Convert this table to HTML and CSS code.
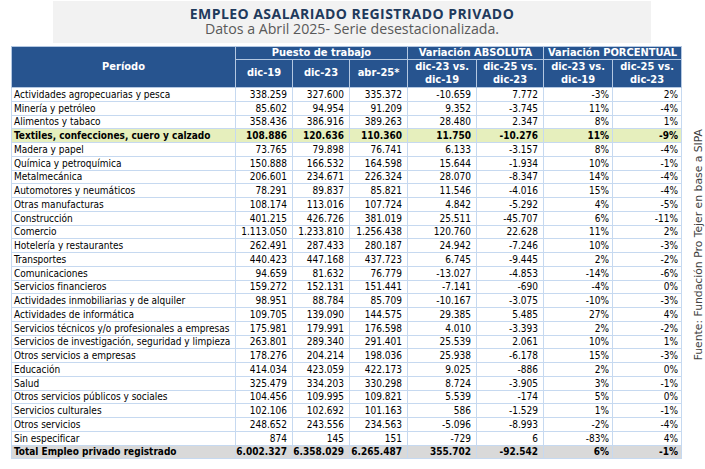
FILE: index.html
```html
<!DOCTYPE html>
<html lang="es">
<head>
<meta charset="utf-8">
<link rel="stylesheet" href="styles.css">
</head>
<body>
<div class="page">
  <div class="titlebox">
    <div class="title">EMPLEO ASALARIADO REGISTRADO PRIVADO</div>
    <div class="subtitle">Datos a Abril 2025- Serie desestacionalizada.</div>
  </div>
  <div class="main">
    <table class="data">
      <colgroup>
        <col class="c-name"><col class="c-n1"><col class="c-n2"><col class="c-n3"><col class="c-a1"><col class="c-a2"><col class="c-p1"><col class="c-p2">
      </colgroup>
      <thead>
        <tr class="h1">
          <th rowspan="2">Período</th>
          <th colspan="3">Puesto de trabajo</th>
          <th colspan="2">Variación ABSOLUTA</th>
          <th colspan="2">Variación PORCENTUAL</th>
        </tr>
        <tr class="h2">
          <th>dic-19</th><th>dic-23</th><th>abr-25*</th>
          <th>dic-23 vs.<br>dic-19</th><th>dic-25 vs.<br>dic-23</th>
          <th>dic-23 vs.<br>dic-19</th><th>dic-25 vs.<br>dic-23</th>
        </tr>
      </thead>
      <tbody>
        <tr><td>Actividades agropecuarias y pesca</td><td>338.259</td><td>327.600</td><td>335.372</td><td>-10.659</td><td>7.772</td><td class="p">-3%</td><td class="p">2%</td></tr>
        <tr><td>Minería y petróleo</td><td>85.602</td><td>94.954</td><td>91.209</td><td>9.352</td><td>-3.745</td><td class="p">11%</td><td class="p">-4%</td></tr>
        <tr><td>Alimentos y tabaco</td><td>358.436</td><td>386.916</td><td>389.263</td><td>28.480</td><td>2.347</td><td class="p">8%</td><td class="p">1%</td></tr>
        <tr class="hl"><td>Textiles, confecciones, cuero y calzado</td><td>108.886</td><td>120.636</td><td>110.360</td><td>11.750</td><td>-10.276</td><td class="p">11%</td><td class="p">-9%</td></tr>
        <tr><td>Madera y papel</td><td>73.765</td><td>79.898</td><td>76.741</td><td>6.133</td><td>-3.157</td><td class="p">8%</td><td class="p">-4%</td></tr>
        <tr><td>Química y petroquímica</td><td>150.888</td><td>166.532</td><td>164.598</td><td>15.644</td><td>-1.934</td><td class="p">10%</td><td class="p">-1%</td></tr>
        <tr><td>Metalmecánica</td><td>206.601</td><td>234.671</td><td>226.324</td><td>28.070</td><td>-8.347</td><td class="p">14%</td><td class="p">-4%</td></tr>
        <tr><td>Automotores y neumáticos</td><td>78.291</td><td>89.837</td><td>85.821</td><td>11.546</td><td>-4.016</td><td class="p">15%</td><td class="p">-4%</td></tr>
        <tr><td>Otras manufacturas</td><td>108.174</td><td>113.016</td><td>107.724</td><td>4.842</td><td>-5.292</td><td class="p">4%</td><td class="p">-5%</td></tr>
        <tr><td>Construcción</td><td>401.215</td><td>426.726</td><td>381.019</td><td>25.511</td><td>-45.707</td><td class="p">6%</td><td class="p">-11%</td></tr>
        <tr><td>Comercio</td><td>1.113.050</td><td>1.233.810</td><td>1.256.438</td><td>120.760</td><td>22.628</td><td class="p">11%</td><td class="p">2%</td></tr>
        <tr><td>Hotelería y restaurantes</td><td>262.491</td><td>287.433</td><td>280.187</td><td>24.942</td><td>-7.246</td><td class="p">10%</td><td class="p">-3%</td></tr>
        <tr><td>Transportes</td><td>440.423</td><td>447.168</td><td>437.723</td><td>6.745</td><td>-9.445</td><td class="p">2%</td><td class="p">-2%</td></tr>
        <tr><td>Comunicaciones</td><td>94.659</td><td>81.632</td><td>76.779</td><td>-13.027</td><td>-4.853</td><td class="p">-14%</td><td class="p">-6%</td></tr>
        <tr><td>Servicios financieros</td><td>159.272</td><td>152.131</td><td>151.441</td><td>-7.141</td><td>-690</td><td class="p">-4%</td><td class="p">0%</td></tr>
        <tr><td>Actividades inmobiliarias y de alquiler</td><td>98.951</td><td>88.784</td><td>85.709</td><td>-10.167</td><td>-3.075</td><td class="p">-10%</td><td class="p">-3%</td></tr>
        <tr><td>Actividades de informática</td><td>109.705</td><td>139.090</td><td>144.575</td><td>29.385</td><td>5.485</td><td class="p">27%</td><td class="p">4%</td></tr>
        <tr><td>Servicios técnicos y/o profesionales a empresas</td><td>175.981</td><td>179.991</td><td>176.598</td><td>4.010</td><td>-3.393</td><td class="p">2%</td><td class="p">-2%</td></tr>
        <tr><td>Servicios de investigación, seguridad y limpieza</td><td>263.801</td><td>289.340</td><td>291.401</td><td>25.539</td><td>2.061</td><td class="p">10%</td><td class="p">1%</td></tr>
        <tr><td>Otros servicios a empresas</td><td>178.276</td><td>204.214</td><td>198.036</td><td>25.938</td><td>-6.178</td><td class="p">15%</td><td class="p">-3%</td></tr>
        <tr><td>Educación</td><td>414.034</td><td>423.059</td><td>422.173</td><td>9.025</td><td>-886</td><td class="p">2%</td><td class="p">0%</td></tr>
        <tr><td>Salud</td><td>325.479</td><td>334.203</td><td>330.298</td><td>8.724</td><td>-3.905</td><td class="p">3%</td><td class="p">-1%</td></tr>
        <tr><td>Otros servicios públicos y sociales</td><td>104.456</td><td>109.995</td><td>109.821</td><td>5.539</td><td>-174</td><td class="p">5%</td><td class="p">0%</td></tr>
        <tr><td>Servicios culturales</td><td>102.106</td><td>102.692</td><td>101.163</td><td>586</td><td>-1.529</td><td class="p">1%</td><td class="p">-1%</td></tr>
        <tr><td>Otros servicios</td><td>248.652</td><td>243.556</td><td>234.563</td><td>-5.096</td><td>-8.993</td><td class="p">-2%</td><td class="p">-4%</td></tr>
        <tr><td>Sin especificar</td><td>874</td><td>145</td><td>151</td><td>-729</td><td>6</td><td class="p">-83%</td><td class="p">4%</td></tr>
        <tr class="total"><td>Total Empleo privado registrado</td><td>6.002.327</td><td>6.358.029</td><td>6.265.487</td><td>355.702</td><td>-92.542</td><td class="p">6%</td><td class="p">-1%</td></tr>
      </tbody>
    </table>
    <div class="source">Fuente: Fundación Pro Tejer en base a SIPA</div>
  </div>
</div>
</body>
</html>
```

FILE: styles.css
```css
html, body {
  margin: 0;
  padding: 0;
  background: #ffffff;
}

.page {
  width: 705px;
  height: 469px;
  display: flex;
  flex-direction: column;
  font-family: "DejaVu Sans Condensed", "Liberation Sans", sans-serif;
}

.titlebox {
  margin: 1px 0 0 53px;
  width: 598px;
  height: 42px;
  background: #f2f2f2;
  display: flex;
  flex-direction: column;
  align-items: center;
  font-family: "Open Sans", "Liberation Sans", sans-serif;
}

.title {
  margin-top: 5px;
  font-weight: 700;
  font-size: 14px;
  line-height: 15px;
  color: #1f3a5c;
  letter-spacing: 0.45px;
}

.subtitle {
  font-size: 14.2px;
  line-height: 16px;
  color: #595959;
}

.main {
  display: flex;
  align-items: flex-start;
  margin-top: 3px;
  margin-left: 11px;
}

.data {
  border-collapse: collapse;
  table-layout: fixed;
  width: 670px;
  font-size: 10px;
  color: #000;
}

.c-name { width: 224px; }
.c-n1 { width: 57px; }
.c-n2 { width: 57px; }
.c-n3 { width: 58px; }
.c-a1 { width: 69px; }
.c-a2 { width: 67px; }
.c-p1 { width: 69px; }
.c-p2 { width: 69px; }

.data th {
  background: #27548f;
  color: #ffffff;
  font-weight: 700;
  font-size: 11px;
  border: 1px solid #b4c8e2;
  padding: 0;
  text-align: center;
  vertical-align: middle;
}

.h1 th { height: 12px; line-height: 12px; }
.h2 th { height: 27px; line-height: 12.5px; }

.data td {
  border: 1px solid #c6d9f0;
  padding: 0 5px 0 0;
  height: 12.75px;
  line-height: 12px;
  text-align: right;
  white-space: nowrap;
  vertical-align: bottom;
}

.data td:first-child {
  text-align: left;
  padding: 0 0 0 2px;
}

.data td.p {
  padding-right: 3px;
}

.hl td {
  background: #e6efbd;
  font-weight: 700;
}

.total td {
  background: #d9d9d9;
  font-weight: 700;
}

.source {
  writing-mode: vertical-rl;
  transform: rotate(180deg);
  margin-top: 83px;
  margin-left: 11px;
  font-family: "DejaVu Sans", "Liberation Sans", sans-serif;
  font-size: 10.8px;
  line-height: 12px;
  color: #404040;
}
```
